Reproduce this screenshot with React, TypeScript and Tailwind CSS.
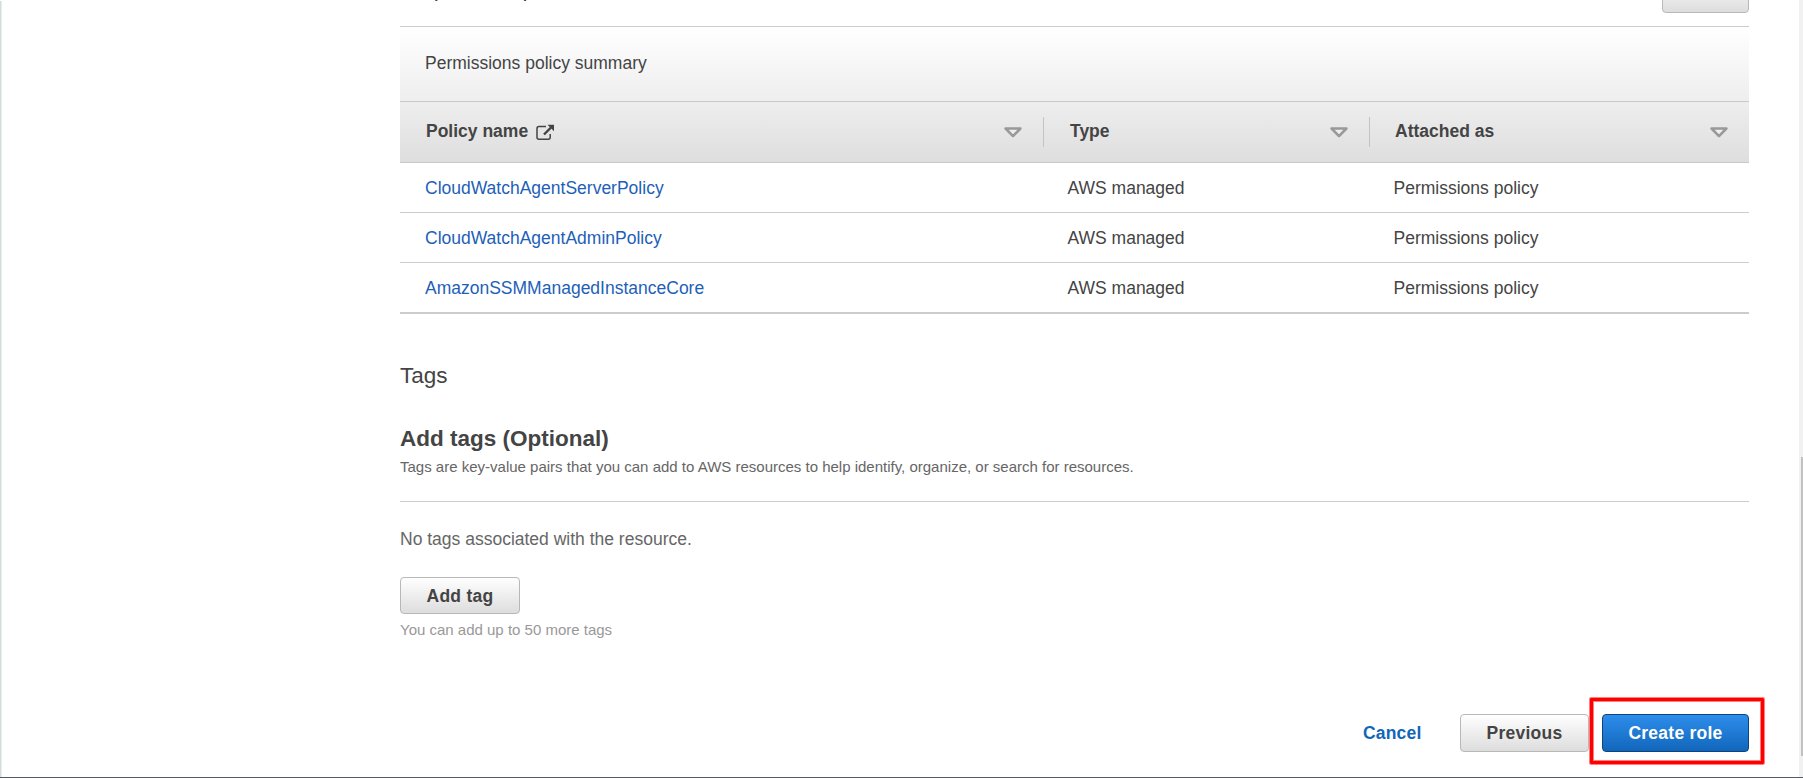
import React from "react";

const rows = ["CloudWatchAgentServerPolicy", "CloudWatchAgentAdminPolicy", "AmazonSSMManagedInstanceCore"];

const cols = "grid grid-cols-[644px_326px_379px]";
const button =
  "flex items-center justify-center rounded-[4px] border border-[#b8b8b8] bg-linear-to-b from-white to-[#dddddd] text-[17.5px] font-bold tracking-[0.25px] text-[#444]";

function SortIcon() {
  return (
    <svg width="18" height="11" viewBox="0 0 18 11" className="mt-px mr-[21px]">
      <path d="M1.6 1.5H16.4L9 9.1Z" fill="#eee" stroke="#999" strokeWidth="2.6" strokeLinejoin="round" />
    </svg>
  );
}

function ExternalIcon() {
  return (
    <svg width="19" height="17" viewBox="0 0 19 17" fill="none" stroke="#444" className="mt-[3px] ml-[7.5px]">
      <path d="M10 2.5H3Q1 2.5 1 4.5V13.2Q1 15.2 3 15.2H12.2Q14.2 15.2 14.2 13.2V10" strokeWidth="1.5" />
      <path d="M8 10.5L15 3.5" strokeWidth="2.4" />
      <path d="M11.5 0.7H18V7.2Z" fill="#444" stroke="none" />
    </svg>
  );
}

function HeaderCell({ label, divider, children }: { label: string; divider?: boolean; children?: React.ReactNode }) {
  return (
    <div className={"flex h-[30px] items-center justify-between " + (divider ? "border-r border-[#c4c4c4]" : "")}>
      <div className={"flex items-center pb-[2px] " + (divider ? "pl-[26px]" : "pl-[25px]")}>
        <span>{label}</span>
        {children}
      </div>
      <SortIcon />
    </div>
  );
}

export default function App() {
  return (
    <div className="relative flex h-[778px] w-[1803px] overflow-hidden border-b border-[#545b64] bg-white font-['Liberation_Sans',Arial,sans-serif] text-[17.5px] leading-[22px] text-[#444]">
      <div className="mt-px w-[2px] shrink-0 border-r border-[#eaeded] bg-[#d5dbdb]" />
      <main className="ml-[398px] flex w-[1349px] flex-col">
        <div className="flex h-[26px] items-start justify-between">
          <h2 className="-mt-[25px] text-[22.5px] leading-[28px]">Step 2: Add permissions</h2>
          <div className="-mt-[24px] h-[37px] w-[87px] rounded-[4px] border border-[#b8b8b8] bg-linear-to-b from-white to-[#dddddd]" />
        </div>
        <section className="border-b-2 border-[#ccc]">
          <div className="flex h-[75px] items-center border-t border-[#ccc] bg-linear-to-b from-white to-[#eeeeee] pb-[3px] pl-[25px]">
            Permissions policy summary
          </div>
          <div className={cols + " h-[62px] items-center border-y border-[#c8c8c8] bg-linear-to-b from-[#eeeeee] to-[#dedede] font-bold"}>
            <HeaderCell label="Policy name" divider>
              <ExternalIcon />
            </HeaderCell>
            <HeaderCell label="Type" divider />
            <HeaderCell label="Attached as" />
          </div>
          {rows.map((name) => (
            <div key={name} className={cols + " h-[50px] items-center border-b border-[#ccc] last:h-[49px] last:border-b-0"}>
              <a className="pl-[25px] text-[#1e5fb8]">{name}</a>
              <span className="pl-[23.5px]">AWS managed</span>
              <span className="pl-[23.5px]">Permissions policy</span>
            </div>
          ))}
        </section>
        <h2 className="mt-[48px] text-[22.5px] leading-[28px]">Tags</h2>
        <h3 className="mt-[35px] text-[22.5px] leading-[28px] font-bold">Add tags (Optional)</h3>
        <p className="mt-[4px] text-[15px] leading-[20px] text-[#666]">
          Tags are key-value pairs that you can add to AWS resources to help identify, organize, or search for resources.
        </p>
        <div className="mt-[24px] border-t border-[#ccc]" />
        <p className="mt-[26px] text-[#666]">No tags associated with the resource.</p>
        <button className={button + " mt-[27px] h-[37px] w-[120px]"}>Add tag</button>
        <p className="mt-[6px] text-[15px] leading-[20px] text-[#999]">You can add up to 50 more tags</p>
        <div className="mt-[74px] flex items-center justify-end">
          <a className="mr-[38.5px] font-bold tracking-[0.2px] text-[#1166bb]">Cancel</a>
          <button className={button + " mr-[13px] h-[38px] w-[129px]"}>Previous</button>
          <button className="relative flex h-[38px] w-[147px] items-center justify-center rounded-[4px] border border-[#0c447c] bg-linear-to-b from-[#2d8eec] to-[#1166bb] text-[17.5px] font-bold tracking-[0.25px] text-white">
            Create role
            <span className="absolute -top-[17px] -left-[13px] h-[66px] w-[174px] rounded-[1px] border-3 border-[#ff0000] shadow-[0_0_0_1px_#ff000080,inset_0_0_0_1px_#ff000080]" />
          </button>
        </div>
      </main>
      <div className="ml-auto flex w-[4px] flex-col bg-[#f1f1f1] pt-[457px]">
        <div className="ml-auto h-[299px] w-[2px] bg-[#c1c1c1]" />
      </div>
    </div>
  );
}
